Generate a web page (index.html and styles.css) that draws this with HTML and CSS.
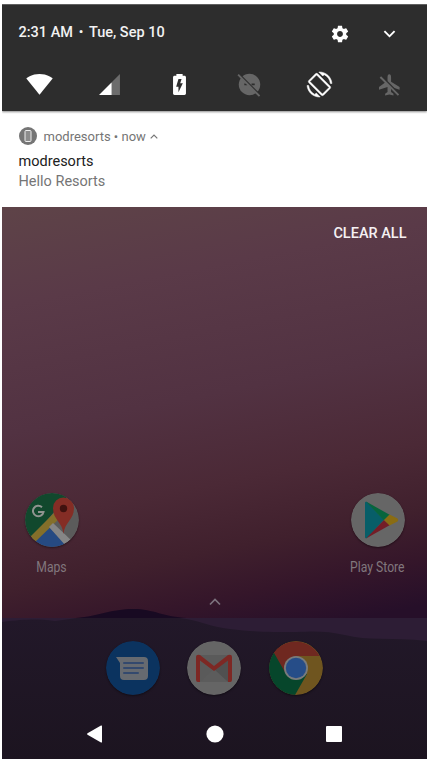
FILE: index.html
```html
<!DOCTYPE html>
<html lang="en">
<head>
<meta charset="utf-8">
<title>Notifications</title>
<link rel="stylesheet" href="styles.css">
</head>
<body>
<main class="phone">
  <header class="shade">
    <div class="status">
      <span class="clock">2:31 AM<span class="dot">•</span>Tue, Sep 10</span>
      <svg class="gear" viewBox="0 0 24 24"><path d="M19.43 12.98c.04-.32.07-.64.07-.98s-.03-.66-.07-.98l2.11-1.65c.19-.15.24-.42.12-.64l-2-3.46c-.12-.22-.39-.3-.61-.22l-2.49 1c-.52-.4-1.08-.73-1.69-.98l-.38-2.65C14.46 2.18 14.25 2 14 2h-4c-.25 0-.46.18-.49.42l-.38 2.65c-.61.25-1.17.59-1.69.98l-2.49-1c-.23-.09-.49 0-.61.22l-2 3.46c-.13.22-.07.49.12.64l2.11 1.65c-.04.32-.07.65-.07.98s.03.66.07.98l-2.11 1.65c-.19.15-.24.42-.12.64l2 3.46c.12.22.39.3.61.22l2.49-1c.52.4 1.08.73 1.69.98l.38 2.65c.03.24.24.42.49.42h4c.25 0 .46-.18.49-.42l.38-2.65c.61-.25 1.17-.59 1.69-.98l2.49 1c.23.09.49 0 .61-.22l2-3.46c.12-.22.07-.49-.12-.64l-2.11-1.65zM12 15.5c-1.93 0-3.5-1.57-3.5-3.5s1.57-3.5 3.5-3.5 3.5 1.57 3.5 3.5-1.57 3.5-3.5 3.5z"/></svg>
      <svg class="expand" viewBox="0 0 24 24"><path d="M7.41 7.84L12 12.42l4.59-4.58L18 9.25l-6 6-6-6z"/></svg>
    </div>
    <div class="toggles">
      <svg viewBox="0 0 24 24"><path d="M12.01 21.9L24.6 6.2C24.1 5.8 19.3 2 12 2S-.1 5.8-.6 6.2L12 21.9z"/></svg>
      <svg viewBox="0 0 24 24"><path opacity=".3" d="M2 22h20V2z"/><path d="M14 10L2 22h12z"/></svg>
      <svg viewBox="0 0 24 24"><path d="M16.800 3.600H15V2H9v1.600H7.200C6.400 3.600 5.800 4.200 5.800 5v15.700C5.800 21.400 6.400 22 7.200 22h9.600c.8 0 1.400-.6 1.400-1.300V5c0-.8-.6-1.400-1.400-1.400zM11 19.500v-5.300H8.800L11 6.800h3l-1.300 4h2.500L11 19.500z"/></svg>
      <svg class="off" viewBox="0 0 24 24"><circle cx="12" cy="12" r="10.300"/><path class="cut" d="M7 11h3v1.600H7zM14 11h3v1.600h-3z"/><path class="cut" d="M2.400 1.200L22.800 21.600l-1.600 1.600L.8 2.800z"/><path d="M1.700 1.900L22.300 22.500 21 23.800.4 3.200z"/></svg>
      <svg class="rotate" viewBox="0 0 24 24"><path d="M16.480 2.520c3.270 1.550 5.610 4.720 5.970 8.480h1.500C23.440 4.840 18.290 0 12 0l-.66.03 3.810 3.810 1.330-1.320zm-6.250-.77c-.59-.59-1.540-.59-2.120 0L1.750 8.110c-.59.59-.59 1.540 0 2.120l12.020 12.020c.59.59 1.540.59 2.120 0l6.360-6.360c.59-.59.59-1.540 0-2.120L10.230 1.750zm4.600 19.440L2.810 9.170l6.360-6.360 12.020 12.020-6.360 6.360zm-7.310.29C4.250 19.940 1.910 16.760 1.550 13H.05C.56 19.160 5.710 24 12 24l.66-.03-3.810-3.810-1.330 1.320z"/></svg>
      <svg class="off" viewBox="0 0 24 24"><path d="M10.100 8.500V5q0-2.800 1.700-2.800T13.500 5v4.300l8.200 5V17l-8.200-2.600v4.800l2.300 1.700v1.600l-4-1-4 1v-1.600l2.300-1.700v-4.800L1.900 17v-2.700z"/><path class="cut" d="M4.600 3.200L22 20.600 20.400 22.200 3 4.800z"/><path d="M3.900 4.100L21.300 21.500 20 22.800 2.600 5.400z"/></svg>
    </div>
  </header>

  <article class="notification">
    <div class="source">
      <svg class="app-mark" viewBox="0 0 18 18"><circle cx="9" cy="9" r="9" fill="#757575"/><rect x="6" y="3.500" width="6" height="11" rx="1" fill="#8c8c8c" stroke="#ededed"/></svg>
      <span class="source-text">modresorts • now</span>
      <svg class="collapse" viewBox="0 0 8 5"><path d="M.7 4.300L4 1l3.300 3.300" fill="none" stroke="#757575" stroke-width="1.200"/></svg>
    </div>
    <h1 class="title">modresorts</h1>
    <p class="message">Hello Resorts</p>
  </article>

  <section class="home">
    <svg class="wallpaper" viewBox="0 0 425 552" preserveAspectRatio="none">
      <defs>
        <linearGradient id="dusk" gradientUnits="userSpaceOnUse" x1="170" y1="-30" x2="260" y2="430">
          <stop offset="0" stop-color="#5e4348"/><stop offset=".2" stop-color="#5a3a48"/>
          <stop offset=".47" stop-color="#523242"/><stop offset=".66" stop-color="#4b2936"/>
          <stop offset=".8" stop-color="#40202d"/><stop offset=".9" stop-color="#35162a"/>
          <stop offset="1" stop-color="#260f29"/>
        </linearGradient>
        <linearGradient id="land" x1="0" y1="0" x2="0" y2="1">
          <stop offset="0" stop-color="#221829"/><stop offset="1" stop-color="#1c1420"/>
        </linearGradient>
      </defs>
      <path fill="url(#dusk)" d="M0 0h425v552H0z"/>
      <path fill="#180a22" d="M74 411C98 409 108 402 132 402C151 402 162 410 185 411z"/>
      <path fill="#2d1d35" d="M0 411h425v141H0z"/>
      <path fill="url(#land)" d="M0 415C25 412 35 412 53 414L75 411H178C196 413 209 420 228 422C252 425 267 425 294 425C314 424 326 424 343 428C365 434 392 430 425 434V552H0z"/>
    </svg>
    <button class="clear">CLEAR ALL</button>
    <div class="apps">
      <div class="app">
        <svg class="icon" viewBox="0 0 54 54">
          <defs><clipPath id="disc"><circle cx="27" cy="27" r="27"/></clipPath></defs>
          <g clip-path="url(#disc)">
            <path fill="#5b5b5b" d="M0 0h54v54H0z"/><path fill="#11482d" d="M0 0h45L3 50H0z"/>
            <path fill="#264a82" d="M8 49L24 34l19 20H10z"/>
            <path fill="#846f2a" d="M5 44L31 18l5 6L9 50z"/>
            <path fill="#868686" d="M24 34l4-4 19 18-6 5z"/>
          </g>
          <path fill="#842d25" d="M38.500 41c-1-12-10.500-14-10.500-26a10.500 10.500 0 0 1 21 0c0 12-9.500 14-10.500 26z"/>
          <circle cx="38.500" cy="15.500" r="3.700" fill="#40120f"/>
          <path d="M17 14.200A5.300 5.300 0 1 0 18.500 19H13" fill="none" stroke="#909490" stroke-width="2"/>
        </svg>
        <span class="app-name">Maps</span>
      </div>
      <div class="app">
        <svg class="icon" viewBox="0 0 54 54"><circle cx="27" cy="27" r="27" fill="#666"/>
          <path fill="#075e68" d="M14 10q0-2 2-1l17 18-17 18q-2 1-2-1z"/><path fill="#07653c" d="M15 8.500L39 22l-6 5.500z"/><path fill="#741d27" d="M15 45.500L39 32l-6-5z"/><path fill="#8a6c13" d="M38.500 21.500l8 4q1.500 1.500 0 3l-8 4-5.500-5.500z"/>
        </svg>
        <span class="app-name">Play Store</span>
      </div>
    </div>
    <svg class="drawer" viewBox="0 0 12 8"><path d="M1 6.500l5-5 5 5" fill="none" stroke="#7c727e" stroke-width="1.700"/></svg>
    <div class="dock">
      <svg class="icon" viewBox="0 0 54 54"><circle cx="27" cy="27" r="27" fill="#0b335f"/><path fill="#666a70" d="M10 16h28q4 0 4 4v15q0 4-4 4H18q-4 0-4-4V22z"/><path stroke="#33496e" stroke-width="2" stroke-linecap="round" d="M18 22h19M18 27h19M18 32h14"/></svg>
      <svg class="icon" viewBox="0 0 54 54"><circle cx="27" cy="27" r="27" fill="#656565"/><path fill="#5a5a5a" d="M10 14h34v27H10z"/><path fill="#505050" d="M13 18l14 10 14-10v23z"/><path fill="#5c5c5c" d="M13 41l14-13 14 13z"/><path fill="#7d2824" d="M9 16q0-3 4-2l14 11 14-11q4-1 4 2v23q0 2-2 2h-2V19.500L27 30 13 19.500V41h-2q-2 0-2-2z"/></svg>
      <svg class="icon" viewBox="0 0 54 54"><circle cx="27" cy="27" r="27" fill="#6f551f"/><path fill="#06462b" d="M4.800 11.500A27 27 0 0 0 26 54L38 33 27 27z"/><path fill="#6f2820" d="M4.800 11.500A27 27 0 0 1 50.500 15H27L17 33z"/><circle cx="27" cy="27" r="12" fill="#797b7c"/><circle cx="27" cy="27" r="10.200" fill="#264d88"/></svg>
    </div>
    <nav class="nav">
      <svg viewBox="0 0 18 18"><path d="M1.500 8.300L15 .6q1-.5 1 .7v15.400q0 1.200-1 .7L1.500 9.700q-1-.7 0-1.400z"/></svg>
      <svg viewBox="0 0 18 18"><circle cx="9" cy="9" r="8.600"/></svg>
      <svg viewBox="0 0 18 18"><rect x="1" y="1" width="16" height="16" rx="1"/></svg>
    </nav>
  </section>
</main>
</body>
</html>
```
FILE: styles.css
```css
* { box-sizing: border-box; }
body { margin: 0; background: #fff; font-family: Roboto, "Liberation Sans", sans-serif; }
svg { display: block; flex: none; }
.phone { width: 425px; height: 755px; margin: 4px 0 0 2px; display: flex; flex-direction: column; overflow: hidden; }

.shade { height: 107px; background: #2d2d2d; border-top: 1px solid #606060; fill: #fff; box-shadow: 0 1px 2px rgba(0,0,0,.45); z-index: 1; }
.status { height: 58px; padding-left: 16.500px; display: flex; align-items: center; }
.clock { width: 303px; color: #f2f2f2; font-size: 14.500px; font-weight: 500; line-height: 20px; white-space: nowrap; padding-bottom: 3px; }
.dot { display: inline-block; width: 16px; text-align: center; font-size: 13px; vertical-align: 1px; line-height: 10px; }
.gear { width: 20px; height: 20px; margin-left: 8.500px; }
.expand { width: 23px; height: 23px; margin-left: 28px; }
.toggles { display: grid; grid-template-columns: repeat(6, 70px); margin-left: 2px; padding-top: 9px; justify-items: center; }
.toggles svg { width: 25px; height: 25px; overflow: visible; }
.toggles .off { fill: #666; }
.toggles .cut { fill: #2d2d2d; }
.toggles .rotate { stroke: #fff; stroke-width: .5px; }

.notification { height: 96px; background: #fff; padding: 15px 16.500px 0; }
.source { display: flex; align-items: center; height: 20px; color: #757575; font-size: 13px; }
.app-mark { width: 18px; height: 18px; margin-right: 7px; }
.collapse { width: 8px; height: 5px; margin-left: 4px; }
.title { margin: 6px 0 0; font-size: 14.500px; line-height: 20px; font-weight: 400; color: #212121; }
.message { margin: 0; font-size: 14.500px; line-height: 20px; color: #757575; }

.home { position: relative; height: 552px; display: flex; flex-direction: column; }
.home > * { position: relative; }
.home .wallpaper { position: absolute; inset: 0; width: 100%; height: 100%; }
.clear { align-self: flex-end; margin: 16px 20.500px 0 0; padding: 0; border: 0; background: none; height: 22px; font: 500 14.500px/22px Roboto, sans-serif; color: #f5f1f3; }
.apps { display: flex; justify-content: space-between; margin-top: 248px; padding: 0 8px; }
.app { width: 83px; display: flex; flex-direction: column; align-items: center; }
.icon { width: 54px; height: 54px; border-radius: 50%; box-shadow: 0 1px 2px rgba(0,0,0,.4); }
.app-name { margin-top: 11px; font-size: 14px; line-height: 18px; color: #81777d; transform: scaleX(.87); white-space: nowrap; }
.drawer { width: 12px; height: 8px; align-self: center; margin-top: 22px; }
.dock { display: flex; justify-content: center; gap: 27.500px; margin-top: 35px; padding-right: 1px; }
.nav { display: flex; justify-content: center; gap: 101.500px; margin-top: 30px; fill: #fff; }
.nav svg { width: 18px; height: 18px; }
```
